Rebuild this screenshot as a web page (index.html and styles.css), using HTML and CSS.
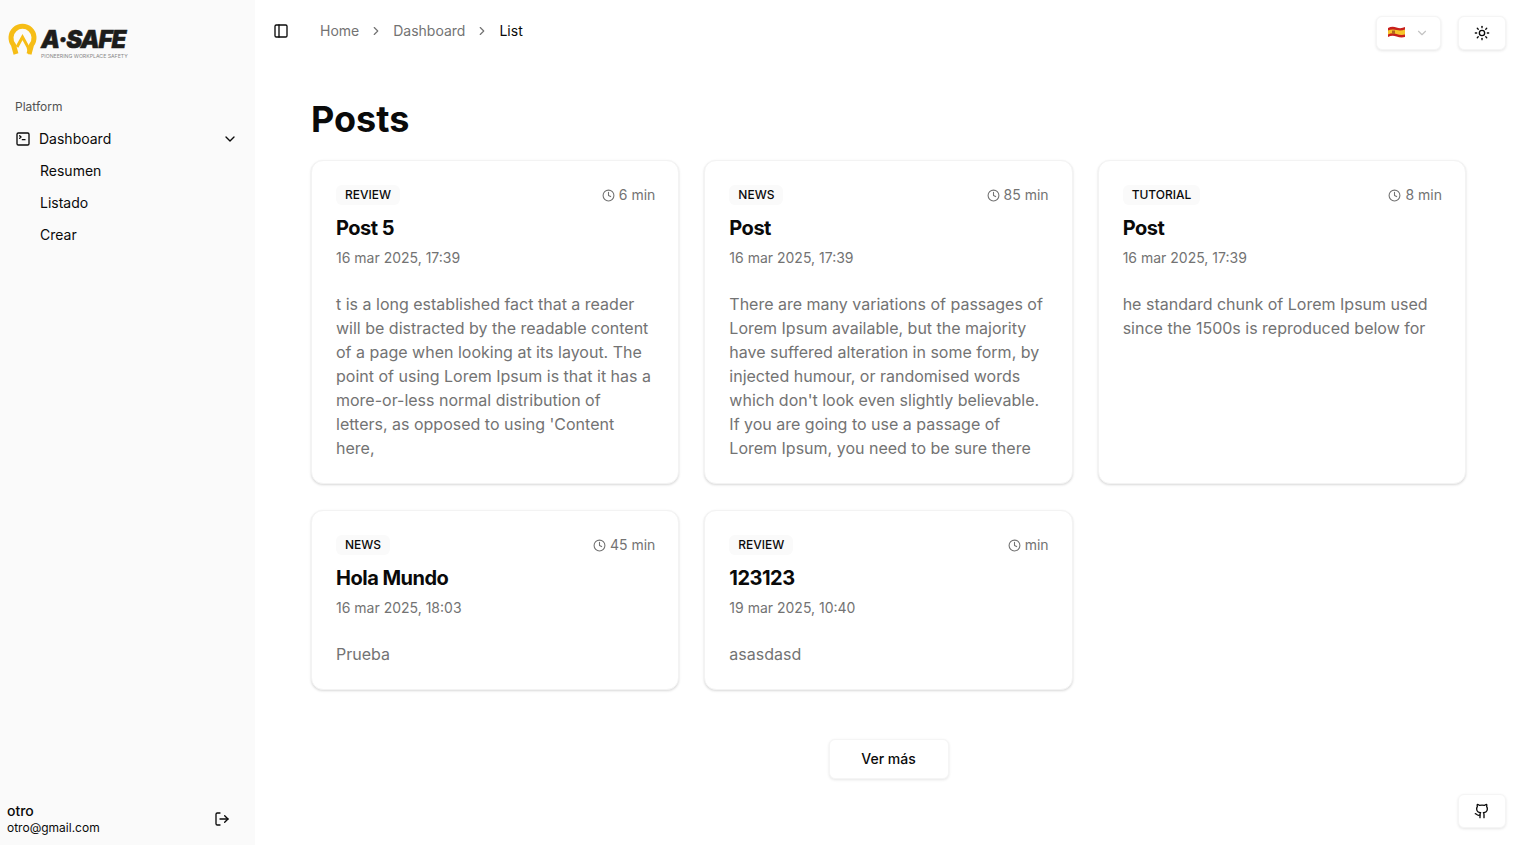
FILE: index.html
```html
<!DOCTYPE html>
<html lang="es">
  <head>
    <meta charset="UTF-8" />
    <meta name="viewport" content="width=device-width, initial-scale=1.0" />
    <title>Posts</title>
    <link rel="stylesheet" href="styles.css">
  </head>
  <body>
    <aside class="sidebar">
      <div class="logo">
        <svg class="logo-mark" width="30" height="32" viewBox="0 0 30 32">
          <path d="M8 31 L5.5 22 A11.5 11.5 0 1 1 23.5 22 L21 31" fill="none" stroke="#f6bd16" stroke-width="5" />
          <path d="M9 24 L14.5 14 L20 24 L22 31" fill="none" stroke="#f6bd16" stroke-width="3" />
        </svg>
        <div class="logo-text">
          <span class="logo-name">A·SAFE</span>
          <span class="logo-tag">PIONEERING WORKPLACE SAFETY</span>
        </div>
      </div>

      <div class="nav-label">Platform</div>
      <a class="nav-item">
        <svg width="16" height="16" viewBox="0 0 24 24" fill="none" stroke="currentColor" stroke-width="2" stroke-linecap="round" stroke-linejoin="round">
          <path d="m7 11 2-2-2-2" /><path d="M11 13h4" /><rect x="3" y="3" width="18" height="18" rx="2" />
        </svg>
        <span class="nav-text">Dashboard</span>
        <svg class="nav-chevron" width="16" height="16" viewBox="0 0 24 24" fill="none" stroke="currentColor" stroke-width="2" stroke-linecap="round" stroke-linejoin="round">
          <path d="m6 9 6 6 6-6" />
        </svg>
      </a>
      <a class="nav-sub">Resumen</a>
      <a class="nav-sub">Listado</a>
      <a class="nav-sub">Crear</a>

      <div class="user">
        <div class="user-info">
          <div class="user-name">otro</div>
          <div class="user-mail">otro@gmail.com</div>
        </div>
        <svg width="16" height="16" viewBox="0 0 24 24" fill="none" stroke="currentColor" stroke-width="2" stroke-linecap="round" stroke-linejoin="round">
          <path d="M9 21H5a2 2 0 0 1-2-2V5a2 2 0 0 1 2-2h4" /><path d="m16 17 5-5-5-5" /><path d="M21 12H9" />
        </svg>
      </div>
    </aside>

    <div class="main">
      <header class="topbar">
        <svg class="toggle" width="16" height="16" viewBox="0 0 24 24" fill="none" stroke="currentColor" stroke-width="2" stroke-linecap="round" stroke-linejoin="round">
          <rect x="3" y="3" width="18" height="18" rx="2" /><path d="M9 3v18" />
        </svg>
        <nav class="crumbs">
          <span>Home</span>
          <svg width="14" height="14" viewBox="0 0 24 24" fill="none" stroke="currentColor" stroke-width="2" stroke-linecap="round" stroke-linejoin="round"><path d="m9 18 6-6-6-6" /></svg>
          <span>Dashboard</span>
          <svg width="14" height="14" viewBox="0 0 24 24" fill="none" stroke="currentColor" stroke-width="2" stroke-linecap="round" stroke-linejoin="round"><path d="m9 18 6-6-6-6" /></svg>
          <span class="crumb-current">List</span>
        </nav>
        <div class="topbar-actions">
          <button class="btn lang">
            <svg class="flag" width="17" height="12" viewBox="0 0 17 12">
              <path d="M0 2 Q4 0 8.5 1.5 T17 1 V11 Q13 12 8.5 10.5 T0 11 Z" fill="#c8201c" />
              <path d="M0 4.5 Q4 3 8.5 4 T17 3.5 V8.5 Q13 9.5 8.5 8 T0 8.5 Z" fill="#f6c52c" />
              <rect x="4" y="4.5" width="3" height="3.5" fill="#b5651d" />
            </svg>
            <svg class="lang-chevron" width="14" height="14" viewBox="0 0 24 24" fill="none" stroke="currentColor" stroke-width="2" stroke-linecap="round" stroke-linejoin="round"><path d="m6 9 6 6 6-6" /></svg>
          </button>
          <button class="btn icon-btn">
            <svg width="16" height="16" viewBox="0 0 24 24" fill="none" stroke="currentColor" stroke-width="2" stroke-linecap="round" stroke-linejoin="round">
              <circle cx="12" cy="12" r="4" /><path d="M12 2v2" /><path d="M12 20v2" /><path d="m4.93 4.93 1.41 1.41" /><path d="m17.66 17.66 1.41 1.41" /><path d="M2 12h2" /><path d="M20 12h2" /><path d="m6.34 17.66-1.41 1.41" /><path d="m19.07 4.93-1.41 1.41" />
            </svg>
          </button>
        </div>
      </header>

      <main class="content">
        <h1>Posts</h1>
        <div class="grid">
          <article class="card">
            <div class="card-top">
              <span class="tag">REVIEW</span>
              <span class="time">
                <svg width="13" height="13" viewBox="0 0 24 24" fill="none" stroke="currentColor" stroke-width="2" stroke-linecap="round" stroke-linejoin="round"><circle cx="12" cy="12" r="10" /><path d="M12 6v6l4 2" /></svg>
                6 min
              </span>
            </div>
            <h2>Post 5</h2>
            <div class="date">16 mar 2025, 17:39</div>
            <p>t is a long established fact that a reader will be distracted by the readable content of a page when looking at its layout. The point of using Lorem Ipsum is that it has a more-or-less normal distribution of letters, as opposed to using 'Content here,</p>
          </article>

          <article class="card">
            <div class="card-top">
              <span class="tag">NEWS</span>
              <span class="time">
                <svg width="13" height="13" viewBox="0 0 24 24" fill="none" stroke="currentColor" stroke-width="2" stroke-linecap="round" stroke-linejoin="round"><circle cx="12" cy="12" r="10" /><path d="M12 6v6l4 2" /></svg>
                85 min
              </span>
            </div>
            <h2>Post</h2>
            <div class="date">16 mar 2025, 17:39</div>
            <p>There are many variations of passages of Lorem Ipsum available, but the majority have suffered alteration in some form, by injected humour, or randomised words which don't look even slightly believable. If you are going to use a passage of Lorem Ipsum, you need to be sure there</p>
          </article>

          <article class="card">
            <div class="card-top">
              <span class="tag">TUTORIAL</span>
              <span class="time">
                <svg width="13" height="13" viewBox="0 0 24 24" fill="none" stroke="currentColor" stroke-width="2" stroke-linecap="round" stroke-linejoin="round"><circle cx="12" cy="12" r="10" /><path d="M12 6v6l4 2" /></svg>
                8 min
              </span>
            </div>
            <h2>Post</h2>
            <div class="date">16 mar 2025, 17:39</div>
            <p>he standard chunk of Lorem Ipsum used since the 1500s is reproduced below for</p>
          </article>

          <article class="card">
            <div class="card-top">
              <span class="tag">NEWS</span>
              <span class="time">
                <svg width="13" height="13" viewBox="0 0 24 24" fill="none" stroke="currentColor" stroke-width="2" stroke-linecap="round" stroke-linejoin="round"><circle cx="12" cy="12" r="10" /><path d="M12 6v6l4 2" /></svg>
                45 min
              </span>
            </div>
            <h2>Hola Mundo</h2>
            <div class="date">16 mar 2025, 18:03</div>
            <p>Prueba</p>
          </article>

          <article class="card">
            <div class="card-top">
              <span class="tag">REVIEW</span>
              <span class="time">
                <svg width="13" height="13" viewBox="0 0 24 24" fill="none" stroke="currentColor" stroke-width="2" stroke-linecap="round" stroke-linejoin="round"><circle cx="12" cy="12" r="10" /><path d="M12 6v6l4 2" /></svg>
                min
              </span>
            </div>
            <h2>123123</h2>
            <div class="date">19 mar 2025, 10:40</div>
            <p>asasdasd</p>
          </article>
        </div>
        <div class="more">
          <button class="btn more-btn">Ver más</button>
        </div>
      </main>
    </div>

    <button class="btn icon-btn github">
      <svg width="16" height="16" viewBox="0 0 24 24" fill="none" stroke="currentColor" stroke-width="2" stroke-linecap="round" stroke-linejoin="round">
        <path d="M15 22v-4a4.8 4.8 0 0 0-1-3.5c3 0 6-2 6-5.5.08-1.25-.27-2.48-1-3.5.28-1.15.28-2.35 0-3.5 0 0-1 0-3 1.5-2.64-.5-5.36-.5-8 0C6 2 5 2 5 2c-.3 1.15-.3 2.35 0 3.5A5.403 5.403 0 0 0 4 9c0 3.5 3 5.5 6 5.5-.39.49-.68 1.05-.85 1.65-.17.6-.22 1.23-.15 1.85v4" /><path d="M9 18c-4.51 2-5-2-7-2" />
      </svg>
    </button>
  </body>
</html>
```

FILE: styles.css
```css
* {
  margin: 0;
  padding: 0;
  box-sizing: border-box;
}
body {
  display: flex;
  min-height: 100vh;
  background: #fff;
  color: #0a0a0a;
  font-family: Inter, "Liberation Sans", sans-serif;
}
button {
  font-family: inherit;
  color: inherit;
  cursor: pointer;
}

/* sidebar */
.sidebar {
  width: 255px;
  flex-shrink: 0;
  height: 845px;
  display: flex;
  flex-direction: column;
  background: #fafafa;
  padding: 23px 7px 0;
}
.logo {
  display: flex;
  align-items: flex-start;
  gap: 3px;
  height: 69px;
  margin-left: 1px;
}
.logo-mark {
  flex-shrink: 0;
}
.logo-text {
  display: flex;
  flex-direction: column;
}
.logo-name {
  font-size: 24px;
  line-height: 27px;
  margin-top: 3px;
  font-weight: 900;
  font-style: italic;
  letter-spacing: -1px;
  -webkit-text-stroke: 0.5px #1d1d1b;
  color: #1d1d1b;
}
.logo-tag {
  font-size: 5.2px;
  line-height: 7px;
  color: #888;
  white-space: nowrap;
}
.nav-label {
  font-size: 12px;
  line-height: 16px;
  color: #525252;
  padding: 0 8px;
  margin: 7px 0 8px;
}
.nav-item {
  display: flex;
  align-items: center;
  gap: 8px;
  height: 32px;
  padding: 0 10px 0 8px;
  font-size: 14px;
}
.nav-text {
  padding-bottom: 2px;
}
.nav-chevron {
  margin-left: auto;
}
.nav-sub {
  display: block;
  height: 32px;
  line-height: 32px;
  font-size: 14px;
  padding-left: 33px;
}
.user {
  margin-top: auto;
  display: flex;
  align-items: center;
  justify-content: space-between;
  padding: 0 18px 10px 0;
}
.user-name {
  font-size: 14px;
  line-height: 18px;
  font-weight: 500;
}
.user-mail {
  font-size: 12px;
  line-height: 15px;
}

/* top bar */
.main {
  flex: 1;
  min-width: 0;
}
.topbar {
  display: flex;
  align-items: center;
  height: 61px;
  padding: 0 15px 0 18px;
}
.toggle {
  margin-right: 31px;
}
.crumbs {
  display: flex;
  align-items: center;
  gap: 10px;
  font-size: 14px;
  color: #737373;
}
.crumb-current {
  color: #0a0a0a;
}
.topbar-actions {
  margin-left: auto;
  margin-top: 5px;
  display: flex;
  gap: 17px;
}
.btn {
  display: flex;
  align-items: center;
  justify-content: center;
  background: #fff;
  border: 1px solid #f5f5f5;
  border-radius: 6px;
  box-shadow: 0 1px 3px rgba(0, 0, 0, 0.1);
}
.lang {
  width: 65px;
  height: 34px;
  gap: 10px;
}
.flag {
  margin-top: -2px;
}
.lang-chevron {
  color: #c4c4c4;
}
.icon-btn {
  width: 48px;
  height: 34px;
}
.github {
  position: fixed;
  right: 15px;
  bottom: 17px;
}

/* posts */
.content {
  padding: 37px 55px 0 56px;
}
h1 {
  font-size: 36px;
  line-height: 42px;
  font-weight: 700;
  margin-bottom: 20px;
}
.grid {
  display: grid;
  grid-template-columns: repeat(3, 1fr);
  gap: 26px 25px;
}
.card {
  background: #fff;
  border: 1px solid #f3f3f3;
  border-radius: 12px;
  box-shadow: 0 1px 3px rgba(0, 0, 0, 0.1), 0 1px 2px rgba(0, 0, 0, 0.06);
  padding: 23px 24px;
}
.card-top {
  display: flex;
  align-items: center;
  justify-content: space-between;
  height: 22px;
}
.tag {
  font-size: 12px;
  line-height: 20px;
  font-weight: 500;
  padding: 0 9px;
  border-radius: 6px;
  background: #fafafa;
}
.time {
  display: flex;
  align-items: center;
  gap: 4px;
  height: 20px;
  line-height: 18px;
  margin-right: -1px;
  font-size: 14px;
  color: #737373;
}
h2 {
  font-size: 20px;
  line-height: 28px;
  font-weight: 700;
  letter-spacing: -0.5px;
  margin-top: 8px;
}
.date {
  font-size: 14px;
  line-height: 20px;
  color: #737373;
  margin-top: 6px;
}
.card p {
  font-size: 16px;
  line-height: 24px;
  color: #737373;
  margin-top: 24px;
}
.more {
  display: flex;
  justify-content: center;
  margin-top: 49px;
}
.more-btn {
  width: 120px;
  height: 40px;
  padding-bottom: 2px;
  font-size: 14px;
  font-weight: 500;
}
```
